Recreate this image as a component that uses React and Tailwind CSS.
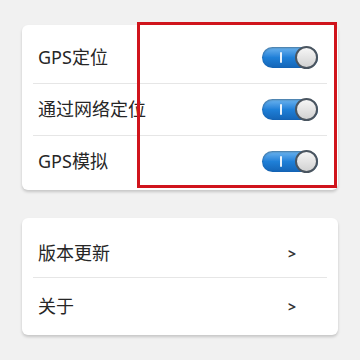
import React from 'react';

const font = { fontFamily: '"Noto Sans", "Noto Sans CJK SC", sans-serif' };

const Toggle = () => (
  <div className="relative w-[56px] h-[21px] rounded-full bg-gradient-to-b from-[#6db6f0] via-[#1f80d8] to-[#1464b6] shadow-[inset_0_1px_2px_rgba(0,0,0,0.35)]">
    <div className="absolute left-[18px] top-[5px] w-[2px] h-[11px] bg-white/90 rounded" />
    <div className="absolute right-0 top-[-1px] w-[23px] h-[23px] rounded-full bg-gradient-to-b from-[#f6f6f6] to-[#d2d2d2] border-2 border-[#4a5560]" />
  </div>
);

const switches = ['GPS定位', '通过网络定位', 'GPS模拟'];

export default function App() {
  return (
    <div className="w-[360px] h-[360px] bg-[#f1f1f1] pt-[25px] px-[22px] relative" style={font}>
      <div className="bg-white rounded-md shadow-[0_2px_3px_rgba(0,0,0,0.18)] px-[11px] pt-[6px] pb-[3px]">
        {switches.map((t, i) => (
          <div
            key={t}
            className={`h-[52px] flex items-center justify-between pl-[5px] pr-[9px] ${i > 0 ? 'border-t border-[#e6e6e6]' : ''}`}
          >
            <span className="text-[18px] text-[#262626]">{t}</span>
            <Toggle />
          </div>
        ))}
      </div>

      <div className="absolute left-[137px] top-[22px] w-[200px] h-[166px] border-[3px] border-[#d0141c]" />

      <div className="mt-[28px] bg-white rounded-md shadow-[0_2px_3px_rgba(0,0,0,0.18)] px-[11px] pt-[12px]">
        <div className="h-[47px] flex items-center justify-between pl-[5px] pr-[31px]">
          <span className="text-[18px] text-[#262626]">版本更新</span>
          <span className="text-[14px] font-bold text-[#333]">&gt;</span>
        </div>
        <div className="h-[58px] flex items-center justify-between pl-[5px] pr-[31px] border-t border-[#e6e6e6]">
          <span className="text-[18px] text-[#262626]">关于</span>
          <span className="text-[14px] font-bold text-[#333]">&gt;</span>
        </div>
      </div>
    </div>
  );
}
